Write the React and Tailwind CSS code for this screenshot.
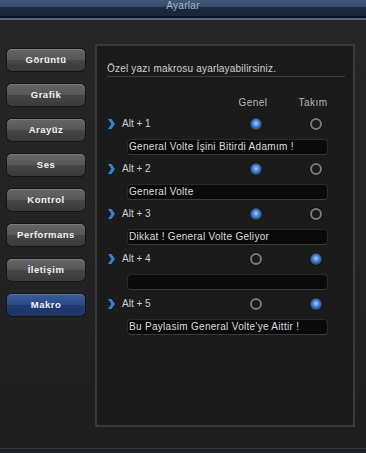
import React from "react";

const font = { fontFamily: '"Liberation Sans", Arial, sans-serif' };

const buttons = ["Görüntü", "Grafik", "Arayüz", "Ses", "Kontrol", "Performans", "İletişim", "Makro"];

const rows = [
  { label: "Alt + 1", sel: 0, text: "General Volte İşini Bitirdi Adamım !" },
  { label: "Alt + 2", sel: 0, text: "General Volte" },
  { label: "Alt + 3", sel: 0, text: "Dikkat ! General Volte Geliyor" },
  { label: "Alt + 4", sel: 1, text: "" },
  { label: "Alt + 5", sel: 1, text: "Bu Paylasim General Volte'ye Aittir !" },
];

function Radio({ on }) {
  if (on) {
    return (
      <div className="w-[12px] h-[12px] rounded-full bg-[#404448] p-[1px] shadow-[0_0_0_1px_#141414]">
        <div className="w-full h-full rounded-full bg-[radial-gradient(circle_at_50%_45%,#a8d0ff_0%,#5a9af0_30%,#2a5fb8_65%,#16356e_100%)]" />
      </div>
    );
  }
  return (
    <div className="w-[12px] h-[12px] rounded-full border-2 border-[#7a7a7a] bg-[#1a1a1a] shadow-[0_0_0_1px_#111111]" />
  );
}

function Chevron() {
  return (
    <svg width="7" height="10" viewBox="0 0 7 10">
      <path d="M0 0 L3.4 0 L7 5 L3.4 10 L0 10 L3.4 5 Z" fill="#3580da" />
    </svg>
  );
}

function SideButton({ label, active }) {
  return (
    <div className="w-[80px] h-[24px] rounded-[6px] bg-[#141414] p-[1px]">
      <div
        className={
          active
            ? "w-full h-full rounded-[5px] flex items-center justify-center bg-[linear-gradient(to_bottom,#3a5a98_0%,#2c4a88_48%,#203b72_52%,#1d3466_100%)] shadow-[inset_0_1px_0_#5474b0]"
            : "w-full h-full rounded-[5px] flex items-center justify-center bg-[linear-gradient(to_bottom,#666666_0%,#575757_48%,#464646_52%,#3a3a3a_100%)] shadow-[inset_0_1px_0_#7a7a7a]"
        }
      >
        <span className="text-[9.5px] font-bold tracking-[0.5px] text-[#f2f2f2] leading-none" style={font}>
          {label}
        </span>
      </div>
    </div>
  );
}

export default function App() {
  return (
    <div className="w-[366px] h-[453px] overflow-hidden flex flex-col bg-[#222222]" style={font}>
      <div className="h-[20px] shrink-0 flex justify-center bg-[linear-gradient(to_bottom,#42597b_0px,#34496a_7px,#1d2a3e_7px,#19253a_16px,#0c1018_16px,#0c1018_18px,#4b6897_18px,#4b6897_20px)]">
        <span className="text-[10px] leading-[12px] tracking-[0.3px] text-[#aab4c4]">Ayarlar</span>
      </div>

      <div className="h-[428px] shrink-0 flex bg-[linear-gradient(to_bottom,#262626_0%,#222222_60%,#1e1e1e_100%)]">
        <div className="w-[95px] shrink-0 pl-[6px] pt-[28px] flex flex-col gap-[11px]">
          {buttons.map((b) => (
            <SideButton key={b} label={b} active={b === "Makro"} />
          ))}
        </div>

        <div className="mt-[24px] w-[260px] h-[383px] border-2 border-[#393939] bg-[#1b1b1b] flex flex-col">
          <div className="ml-[10px] mr-[8px] pt-[17px] pb-[1px] border-b border-[#3e3e3e]">
            <span className="block text-[10px] leading-[12px] tracking-[0.2px] text-[#d2d2d2]">
              Özel yazı makrosu ayarlayabilirsiniz.
            </span>
          </div>

          <div className="mt-[20px] pl-[136px] flex text-[10px] leading-[12px] tracking-[0.5px] text-[#b8b8b8]">
            <span className="w-[40px] text-center">Genel</span>
            <span className="ml-[20px] w-[40px] text-center">Takım</span>
          </div>

          <div className="mt-[8px] flex flex-col gap-[7px]">
            {rows.map((r) => (
              <div key={r.label} className="flex flex-col">
                <div className="h-[14px] flex items-center pl-[11px]">
                  <div className="w-[7px] flex items-center">
                    <Chevron />
                  </div>
                  <span className="ml-[7px] w-[124px] text-[10px] leading-[12px] text-[#cfcfcf]">{r.label}</span>
                  <div className="w-[20px] flex justify-center">
                    <Radio on={r.sel === 0} />
                  </div>
                  <div className="ml-[40px] w-[20px] flex justify-center">
                    <Radio on={r.sel === 1} />
                  </div>
                </div>
                <div className="mt-[8px] ml-[30px] w-[201px] h-[16px] rounded-[4px] bg-[#0a0a0a] border border-[#2a2a2a] border-b-[#3a3a3a] flex items-center pl-[1px]">
                  <span className="text-[10px] leading-[12px] tracking-[0.3px] text-[#dedede] whitespace-nowrap">{r.text}</span>
                </div>
              </div>
            ))}
          </div>
        </div>
      </div>

      <div className="h-[5px] shrink-0 border-t border-[#3a3a3a] bg-[#1a1f28]" />
    </div>
  );
}
